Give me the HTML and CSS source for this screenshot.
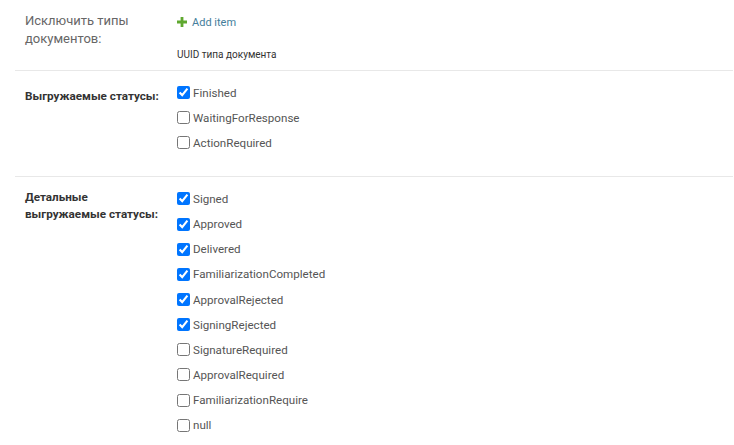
FILE: index.html
```html
<!DOCTYPE html>
<html lang="ru">
<head>
<meta charset="utf-8">
<link rel="stylesheet" href="styles.css">
</head>
<body>
<div class="fieldset">
  <div class="form-row row-exclude">
    <div class="label plain">Исключить типы<br>документов:</div>
    <div class="field">
      <a class="add-item" href="#"><svg class="plus" width="10" height="10" viewBox="0 0 10 10"><path d="M3.6 0h2.8v3.6H10v2.8H6.4V10H3.6V6.4H0V3.6h3.6z" fill="#5fa82f"/></svg>Add item</a>
      <div class="help">UUID типа документа</div>
    </div>
  </div>
  <div class="form-row row-status">
    <div class="label strong">Выгружаемые статусы:</div>
    <ul class="checks">
      <li><label><input type="checkbox" checked>Finished</label></li>
      <li><label><input type="checkbox">WaitingForResponse</label></li>
      <li><label><input type="checkbox">ActionRequired</label></li>
    </ul>
  </div>
  <div class="form-row row-detail">
    <div class="label strong">Детальные<br>выгружаемые статусы:</div>
    <ul class="checks">
      <li><label><input type="checkbox" checked>Signed</label></li>
      <li><label><input type="checkbox" checked>Approved</label></li>
      <li><label><input type="checkbox" checked>Delivered</label></li>
      <li><label><input type="checkbox" checked>FamiliarizationCompleted</label></li>
      <li><label><input type="checkbox" checked>ApprovalRejected</label></li>
      <li><label><input type="checkbox" checked>SigningRejected</label></li>
      <li><label><input type="checkbox">SignatureRequired</label></li>
      <li><label><input type="checkbox">ApprovalRequired</label></li>
      <li><label><input type="checkbox">FamiliarizationRequire</label></li>
      <li><label><input type="checkbox">null</label></li>
    </ul>
  </div>
</div>
</body>
</html>
```
FILE: styles.css
```css
html, body {
  margin: 0;
  padding: 0;
  background: #fff;
}
body {
  font-family: Roboto, "Liberation Sans", sans-serif;
  font-size: 12px;
  color: #333;
}
.fieldset {
  margin-left: 15px;
  margin-right: 1px;
}
.form-row {
  display: flex;
  padding: 10px;
  border-bottom: 1px solid #e8e8e8;
}
.label {
  width: 152px;
  flex: none;
  line-height: 18px;
}
.label.plain {
  color: #666;
  font-size: 13px;
  line-height: 18px;
  padding-top: 1.5px;
}
.label.strong {
  font-weight: bold;
  color: #333;
  font-size: 11.7px;
}
.row-exclude {
  padding-bottom: 8px;
}
.field {
  display: flex;
  flex-direction: column;
}
.add-item {
  display: flex;
  align-items: center;
  flex: none;
  height: 24px;
  font-size: 11px;
  color: #447e9b;
  text-decoration: none;
}
.plus {
  margin-right: 5px;
}
.help {
  flex: none;
  margin-top: 14px;
  font-size: 10px;
  color: #333;
  line-height: 14px;
}
.checks {
  list-style: none;
  margin: -1px 0 0;
  padding: 0;
}
.checks li {
  height: 25.15px;
  display: flex;
  align-items: center;
}
.checks label {
  display: flex;
  align-items: center;
  color: #555;
  font-size: 11.6px;
}
.checks input {
  margin: 0 3px 0 0;
  width: 13px;
  height: 13px;
}
.row-status {
  padding-bottom: 21px;
}
.row-status .label {
  padding-top: 6px;
}
.row-detail .label {
  padding-top: 2px;
  line-height: 17px;
}
```
